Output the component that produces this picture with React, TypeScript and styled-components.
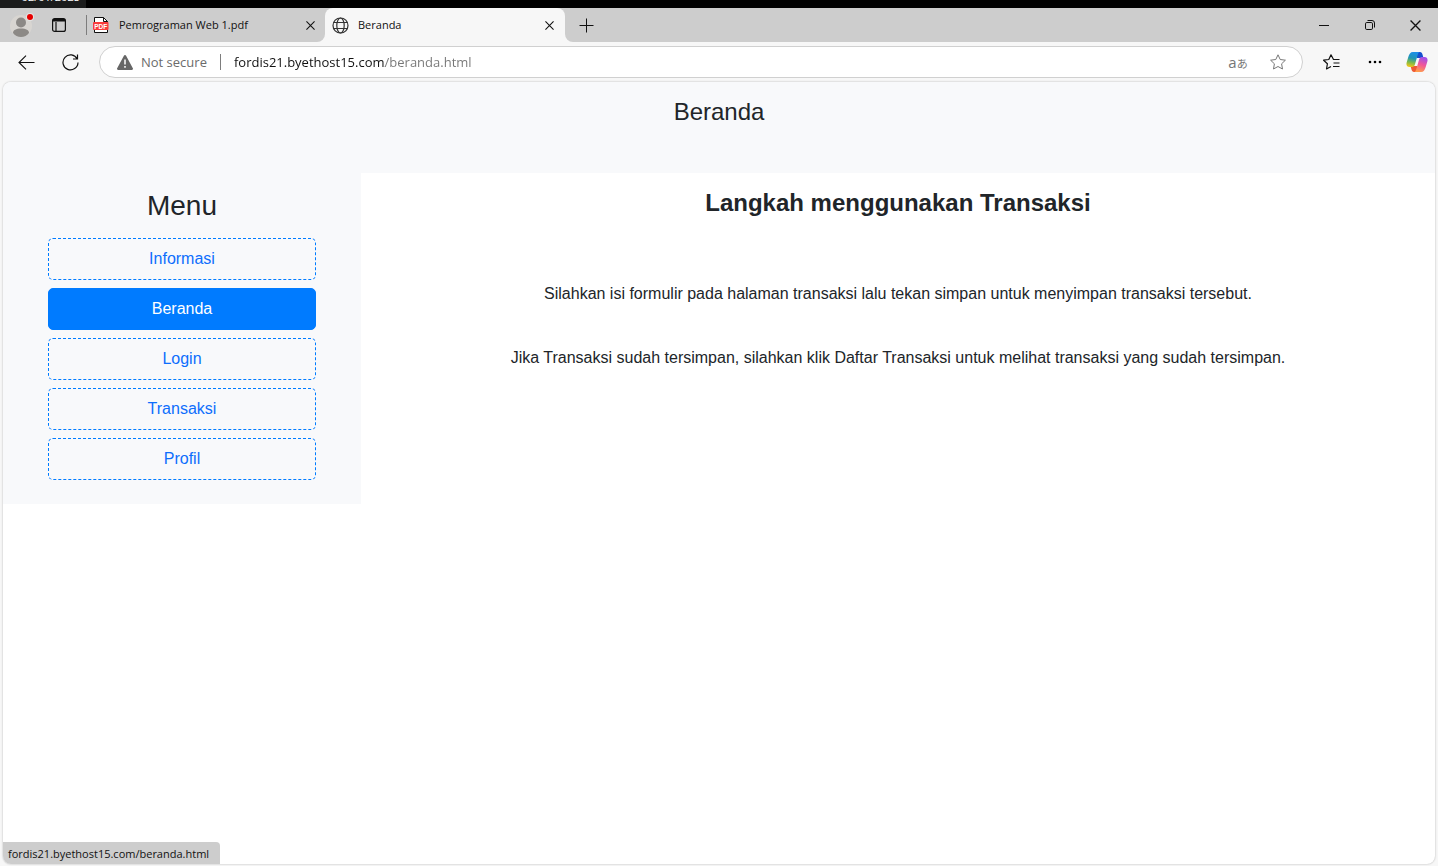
import React from 'react';
import styled, { createGlobalStyle, css } from 'styled-components';

const uiFont = '"Segoe UI", "Open Sans", "Noto Sans", sans-serif';
const siteFont = 'Arial, "Liberation Sans", sans-serif';

const GlobalStyle = createGlobalStyle`
  *, *::before, *::after { box-sizing: border-box; }
  body { margin: 0; background: #f7f7f7; }
  button { font: inherit; color: inherit; }
  h1, h2, p, ul { margin: 0; padding: 0; }
`;

const Window = styled.div`
  display: flex;
  flex-direction: column;
  min-height: 100vh;
  padding-bottom: 2px;
  background: #f7f7f7;
  font-family: ${uiFont};
  color: #111;
`;

const DesktopStrip = styled.div`
  display: flex;
  height: 8px;
  background: #000;
`;

const DesktopDate = styled.div`
  display: flex;
  align-items: flex-end;
  justify-content: flex-end;
  width: 86px;
  height: 8px;
  padding: 0 6px 4px 0;
  overflow: hidden;
  background: #1b1c1c;
  color: #fff;
  font-size: 11px;
  line-height: 14px;
`;

const TabStrip = styled.header`
  display: flex;
  height: 34px;
  font-size: 11px;
`;

const LeadingTabs = styled.div`
  display: flex;
  align-items: center;
  width: 325px;
  background: #cdcdcd;
  border-bottom-right-radius: 8px;
`;

const TrailingStrip = styled.div`
  display: flex;
  flex: 1;
  justify-content: space-between;
  background: #cdcdcd;
  border-bottom-left-radius: 8px;
`;

const ActiveTabSlot = styled.div`
  width: 240px;
  background: linear-gradient(#cdcdcd 50%, #f7f7f7 50%);
`;

const IconButton = styled.button<{ $width: number }>`
  display: flex;
  align-items: center;
  justify-content: center;
  flex: none;
  width: ${(p) => p.$width}px;
  height: 34px;
  padding: 0;
  border: 0;
  background: transparent;
`;

const Tab = styled.div<{ $active?: boolean }>`
  display: flex;
  align-items: center;
  flex: 1;
  height: 34px;
  padding-left: 6px;
  gap: 10px;
  ${(p) =>
    p.$active &&
    css`
      padding-left: 7px;
      gap: 9px;
      background: #f7f7f7;
      border-radius: 8px 8px 0 0;
    `}
`;

const TabTitle = styled.span`
  flex: 1;
  line-height: 16px;
  white-space: nowrap;
`;

const Divider = styled.span<{ $height: number }>`
  flex: none;
  width: 1px;
  height: ${(p) => p.$height}px;
  background: #7d7d7d;
`;

const Controls = styled.div`
  display: flex;
`;

const Toolbar = styled.nav`
  display: flex;
  align-items: center;
  height: 40px;
  padding-left: 4px;
`;

const AddressBar = styled.div`
  display: flex;
  align-items: center;
  flex: 1;
  height: 32px;
  margin: 0 6px 0 7px;
  padding: 0 4px 0 17px;
  background: #fff;
  border: 1px solid #d0d0d0;
  border-radius: 16px;
  font-size: 13px;
`;

const Security = styled.span`
  display: flex;
  align-items: center;
  gap: 8px;
  margin-right: 13px;
  color: #6b6b6b;
  white-space: nowrap;
`;

const AddressInput = styled.input`
  flex: 1;
  min-width: 0;
  margin-left: 13px;
  padding: 0;
  border: 0;
  outline: 0;
  font: inherit;
  line-height: 20px;
  color: transparent;
  background: linear-gradient(to right, #111 151px, #767676 151px);
  background-clip: text;
  -webkit-background-clip: text;
`;

const Translate = styled.span`
  display: flex;
  align-items: baseline;
  color: #767676;
  font-size: 15px;
  line-height: 16px;

  small {
    font-family: "Noto Sans CJK JP", sans-serif;
    font-size: 11px;
    line-height: 16px;
  }
`;

const Viewport = styled.div`
  position: relative;
  display: flex;
  flex: 1;
  flex-direction: column;
  margin: 0 3px;
  overflow: hidden;
  background: #fff;
  border-radius: 8px;
  box-shadow: 0 0 2px rgba(0, 0, 0, 0.3);
  color: #212529;
  font-family: ${siteFont};
  font-size: 16px;
  line-height: 24px;
  text-align: center;
`;

const SiteHeader = styled.header`
  min-height: 91px;
  padding: 16px;
  background: #f8f9fb;
`;

const SiteTitle = styled.h1`
  font-size: 24px;
  font-weight: 400;
  line-height: 28px;
`;

const SiteBody = styled.div`
  display: grid;
  grid-template-columns: 1fr 3fr;
`;

const Sidebar = styled.aside`
  padding: 16px 45px 24px;
  background: #f8f9fb;
`;

const MenuTitle = styled.h2`
  margin-bottom: 15px;
  font-size: 28px;
  font-weight: 400;
  line-height: 34px;
`;

const MenuList = styled.ul`
  display: flex;
  flex-direction: column;
  gap: 8px;
  list-style: none;
`;

const MenuLink = styled.a<{ $active?: boolean }>`
  display: block;
  padding: 8px;
  border: 1px dashed #007bff;
  border-radius: 5px;
  color: #0d6efd;
  text-decoration: none;
  ${(p) =>
    p.$active &&
    css`
      border-style: solid;
      background: #007bff;
      color: #fff;
    `}
`;

const Content = styled.main`
  display: flex;
  flex-direction: column;
  padding: 16px;
  gap: 40px;
`;

const ContentTitle = styled.h2`
  margin-bottom: 25px;
  font-size: 24px;
  font-weight: 700;
  line-height: 28px;
`;

const StatusBubble = styled.div`
  position: absolute;
  left: 0;
  bottom: 0;
  padding: 3px 11px 2px 5px;
  background: #cdcdcd;
  border-top-right-radius: 4px;
  color: #111;
  font-family: ${uiFont};
  font-size: 11px;
  line-height: 17px;
`;

const Line = styled.svg.attrs({ fill: 'none', stroke: 'currentColor', 'aria-hidden': true })`
  display: block;
  flex: none;
`;

const Avatar = () => (
  <svg width="24" height="24" viewBox="0 0 24 24" aria-hidden="true">
    <circle cx="11" cy="13" r="11" fill="#d8d5d1" />
    <circle cx="11" cy="9.5" r="5" fill="#8c8986" />
    <path d="M3 20c0-3 3-4.500 8-4.500s8 1.500 8 4.500c-2 2.500-4.500 4-8 4s-6-1.500-8-4z" fill="#8c8986" />
    <circle cx="20" cy="4" r="4" fill="#e4e4e4" />
    <circle cx="20" cy="4" r="3" fill="#e60000" />
  </svg>
);

const TabActions = () => (
  <Line width="14" height="14" viewBox="0 0 14 14">
    <rect x=".6" y=".6" width="12.800" height="12.800" rx="2" strokeWidth="1.200" />
    <path d="M1 3h12M4 4v9" strokeWidth="1.200" />
    <path d="M1 2h12" strokeWidth="2" />
  </Line>
);

const PdfIcon = () => (
  <svg width="16" height="16" viewBox="0 0 16 16" aria-hidden="true">
    <path d="M1.500.5h9l4 4v11h-13z" fill="#fff" stroke="#111" />
    <path d="M10.500.5v4h4" fill="none" stroke="#111" />
    <rect y="5" width="15.500" height="8" rx="1" fill="#f93b3b" />
    <text x="7.700" y="11.500" fill="#fff" fontFamily="Liberation Sans, sans-serif" fontSize="6.500" fontWeight="700" textAnchor="middle">
      PDF
    </text>
  </svg>
);

const CloseIcon = ({ size }: { size: number }) => (
  <Line width={size} height={size} viewBox="0 0 10 10" strokeWidth="1.200">
    <path d="M.5.5l9 9M9.500.5l-9 9" />
  </Line>
);

const Globe = () => (
  <Line width="17" height="17" viewBox="0 0 17 17" color="#333" strokeWidth="1.200">
    <circle cx="8.500" cy="8.500" r="7.500" />
    <ellipse cx="8.500" cy="8.500" rx="3.700" ry="7.500" />
    <path d="M1.500 5.500h14M1.500 11.500h14" />
  </Line>
);

const Plus = () => (
  <Line width="15" height="15" viewBox="0 0 15 15">
    <path d="M7.500.5v14M.5 7.500h14" />
  </Line>
);

const Minimize = () => (
  <Line width="10" height="10" viewBox="0 0 10 10">
    <path d="M0 5.500h10" />
  </Line>
);

const Restore = () => (
  <Line width="10" height="10" viewBox="0 0 10 10">
    <rect x=".5" y="2.500" width="7" height="7" rx="1.300" />
    <path d="M2.500.5H7A2.500 2.500 0 0 1 9.500 3v4.500" />
  </Line>
);

const Back = () => (
  <Line width="17" height="15" viewBox="0 0 17 15" strokeWidth="1.100">
    <path d="M8 .7L1 7.500l7 6.800M1 7.500h15.500" />
  </Line>
);

const Reload = () => (
  <Line width="17" height="17" viewBox="0 0 17 17" strokeWidth="1.200">
    <path d="M15.200 5A7.500 7.500 0 1 0 16 8.500M15.500.5V5H11" />
  </Line>
);

const Warning = () => (
  <svg width="16" height="15" viewBox="0 0 16 15" aria-hidden="true">
    <path d="M6.900.7a1.250 1.250 0 0 1 2.200 0l6.600 12.200a1.300 1.300 0 0 1-1.200 2.100h-13a1.300 1.300 0 0 1-1.200-2.100z" fill="#666" />
    <path d="M8 4.500v5M8 11v1.700" stroke="#fff" strokeWidth="1.500" />
  </svg>
);

const Star = () => (
  <Line width="16" height="16" viewBox="0 0 16 16" color="#777" strokeLinejoin="round">
    <path d="M8 .8l2.200 4.700 5.200.7-3.800 3.600.9 5.200L8 12.500 3.500 15l.9-5.200L.6 6.200l5.200-.7z" />
  </Line>
);

const Favorites = () => (
  <Line width="17" height="16" viewBox="0 0 17 16" strokeWidth="1.200" strokeLinejoin="round">
    <path d="M16.500 5.500h-6L8 .8 5.800 5.500.6 6.200l3.800 3.600-.9 5.200L8 12.500M10.500 9h6M10 12.500h6.500" />
  </Line>
);

const More = () => (
  <svg width="14" height="4" viewBox="0 0 14 4" aria-hidden="true">
    <circle cx="2" cy="2" r="1.300" />
    <circle cx="7" cy="2" r="1.300" />
    <circle cx="12" cy="2" r="1.300" />
  </svg>
);

const Copilot = () => (
  <svg width="22" height="20" viewBox="0 0 22 20" aria-hidden="true">
    <defs>
      <linearGradient id="cool" x1=".5" y1="0" x2=".3" y2="1">
        <stop offset="0" stopColor="#1c8fe8" />
        <stop offset=".4" stopColor="#2196b5" />
        <stop offset=".7" stopColor="#7dba4a" />
        <stop offset="1" stopColor="#f5c518" />
      </linearGradient>
      <linearGradient id="warm" x1=".7" y1="0" x2=".4" y2="1">
        <stop offset="0" stopColor="#9b50f0" />
        <stop offset=".5" stopColor="#f0569a" />
        <stop offset="1" stopColor="#ff9d4d" />
      </linearGradient>
    </defs>
    <path d="M9 0h5c1.500 0 2 1 2.500 2.500L17.500 6H11z" fill="#1650cf" />
    <path d="M13 20H8c-1.500 0-2-1-2.500-2.500L4.500 14H11z" fill="#ee5a35" />
    <path d="M13.500 0H7C4.300 0 3.200 2 2.300 5L.8 10c-1 3.200.2 5 2.700 5H6c2 0 2.600-1.500 3.200-3.500l2.300-8C12 1.700 12.500.5 13.500 0z" fill="url(#cool)" />
    <path d="M8.500 20H15c2.700 0 3.800-2 4.700-5l1.500-5c1-3.200-.2-5-2.700-5H16c-2 0-2.600 1.500-3.200 3.500l-2.300 8c-.5 1.800-1 3-2 3.500z" fill="url(#warm)" />
  </svg>
);

const menuItems = [
  { label: 'Informasi', href: '#informasi' },
  { label: 'Beranda', href: '#beranda', active: true },
  { label: 'Login', href: '#login' },
  { label: 'Transaksi', href: '#transaksi' },
  { label: 'Profil', href: '#profil' },
];

export default function App() {
  return (
    <Window>
      <GlobalStyle />
      <DesktopStrip>
        <DesktopDate>02/01/2025</DesktopDate>
      </DesktopStrip>

      <TabStrip>
        <LeadingTabs>
          <IconButton $width={44} aria-label="Profile"><Avatar /></IconButton>
          <IconButton $width={30} aria-label="Tab actions"><TabActions /></IconButton>
          <IconButton $width={12} aria-label="Tab list" />
          <Divider $height={20} />
          <Tab>
            <PdfIcon />
            <TabTitle>Pemrograman Web 1.pdf</TabTitle>
            <IconButton $width={30} aria-label="Close Pemrograman Web 1.pdf"><CloseIcon size={9} /></IconButton>
          </Tab>
        </LeadingTabs>
        <ActiveTabSlot>
          <Tab $active>
            <Globe />
            <TabTitle>Beranda</TabTitle>
            <IconButton $width={32} aria-label="Close Beranda"><CloseIcon size={9} /></IconButton>
          </Tab>
        </ActiveTabSlot>
        <TrailingStrip>
          <IconButton $width={43} aria-label="New tab"><Plus /></IconButton>
          <Controls>
            <IconButton $width={46} aria-label="Minimize"><Minimize /></IconButton>
            <IconButton $width={46} aria-label="Restore"><Restore /></IconButton>
            <IconButton $width={45} aria-label="Close window"><CloseIcon size={11} /></IconButton>
          </Controls>
        </TrailingStrip>
      </TabStrip>

      <Toolbar aria-label="Browser">
        <IconButton $width={44} aria-label="Back"><Back /></IconButton>
        <IconButton $width={44} aria-label="Reload"><Reload /></IconButton>
        <AddressBar>
          <Security><Warning />Not secure</Security>
          <Divider $height={16} />
          <AddressInput aria-label="Address" defaultValue="fordis21.byethost15.com/beranda.html" />
          <IconButton $width={40} aria-label="Translate">
            <Translate>a<small>あ</small></Translate>
          </IconButton>
          <IconButton $width={40} aria-label="Add to favorites"><Star /></IconButton>
        </AddressBar>
        <IconButton $width={44} aria-label="Favorites"><Favorites /></IconButton>
        <IconButton $width={43} aria-label="More"><More /></IconButton>
        <IconButton $width={42} aria-label="Copilot"><Copilot /></IconButton>
      </Toolbar>

      <Viewport>
        <SiteHeader>
          <SiteTitle>Beranda</SiteTitle>
        </SiteHeader>
        <SiteBody>
          <Sidebar>
            <MenuTitle>Menu</MenuTitle>
            <MenuList>
              {menuItems.map((item) => (
                <li key={item.label}>
                  <MenuLink href={item.href} $active={item.active}>{item.label}</MenuLink>
                </li>
              ))}
            </MenuList>
          </Sidebar>
          <Content>
            <ContentTitle>Langkah menggunakan Transaksi</ContentTitle>
            <p>Silahkan isi formulir pada halaman transaksi lalu tekan simpan untuk menyimpan transaksi tersebut.</p>
            <p>Jika Transaksi sudah tersimpan, silahkan klik Daftar Transaksi untuk melihat transaksi yang sudah tersimpan.</p>
          </Content>
        </SiteBody>
        <StatusBubble>fordis21.byethost15.com/beranda.html</StatusBubble>
      </Viewport>
    </Window>
  );
}
